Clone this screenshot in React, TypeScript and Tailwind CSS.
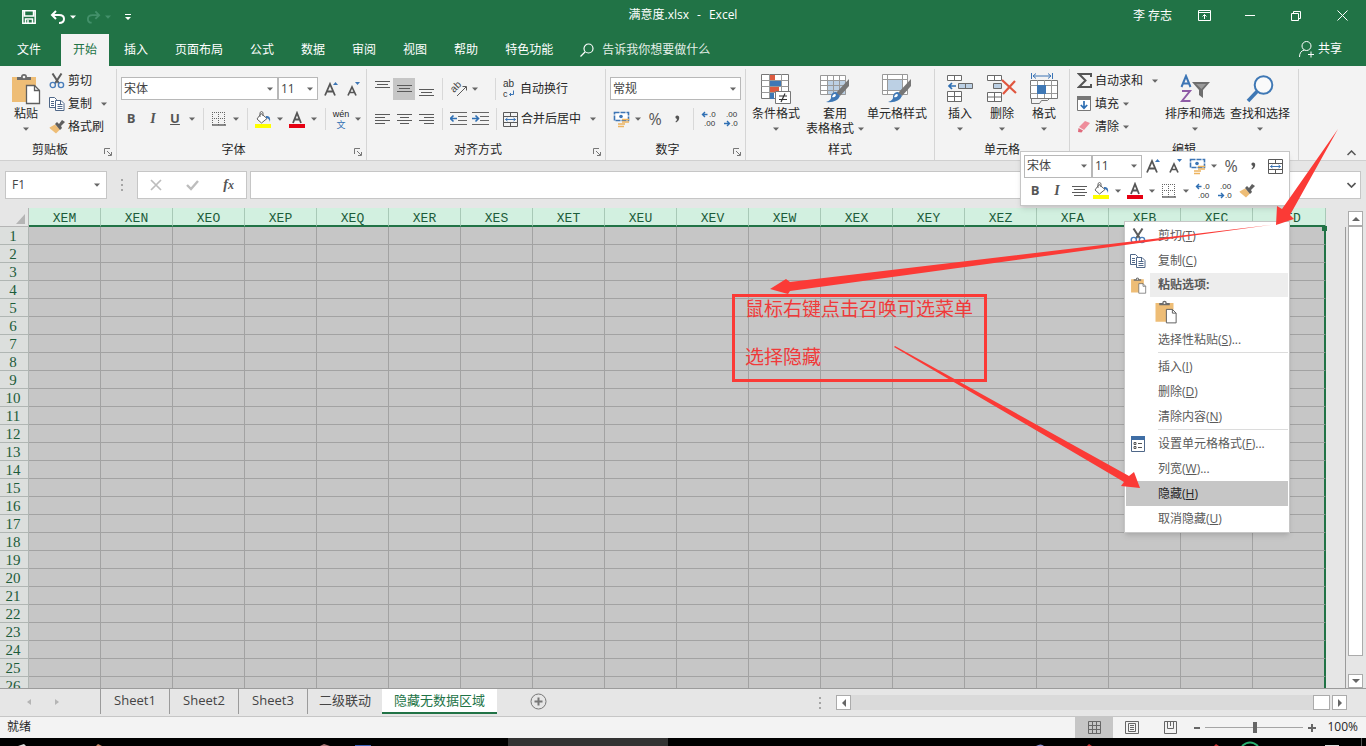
import { useState, type ReactNode } from "react";
import clsx from "clsx";

const columns = ["XEM", "XEN", "XEO", "XEP", "XEQ", "XER", "XES", "XET", "XEU", "XEV", "XEW", "XEX", "XEY", "XEZ", "XFA", "XFB", "XFC", "XFD"];
const rows = Array.from({ length: 26 }, (_, i) => i + 1);
const ribbonTabs = ["开始", "插入", "页面布局", "公式", "数据", "审阅", "视图", "帮助", "特色功能"];
const sheets = ["Sheet1", "Sheet2", "Sheet3", "二级联动", "隐藏无数据区域"];

/* ---------- small building blocks ---------- */

function Caret({ className = "text-[#666]" }: { className?: string }) {
  return (
    <svg width="6" height="4" viewBox="0 0 6 4" className={clsx("shrink-0", className)}>
      <path d="M0 0.5h6L3 3.8z" fill="currentColor" />
    </svg>
  );
}

function CaretBtn({ label }: { label: string }) {
  return (
    <button aria-label={label} className="flex h-[22px] w-3 shrink-0 items-center justify-center">
      <Caret />
    </button>
  );
}

function Tool({ label, active, children }: { label: string; active?: boolean; children: ReactNode }) {
  return (
    <button aria-label={label} className={clsx("flex h-[22px] w-[22px] shrink-0 items-center justify-center", active && "bg-[#c6c6c6]")}>
      {children}
    </button>
  );
}

function Sep() {
  return (
    <span className="flex h-[22px] w-[10px] shrink-0 justify-center">
      <span className="w-px bg-[#d8d8d8]" />
    </span>
  );
}

function Combo({ label, value, className }: { label: string; value: string; className: string }) {
  return (
    <label className={clsx("relative block h-[23px] shrink-0 border border-[#b8b8b8] bg-white", className)}>
      <select aria-label={label} defaultValue={value} className="block h-full w-full appearance-none bg-transparent pl-[2px] text-xs text-[#444] outline-none">
        <option>{value}</option>
      </select>
      <span className="pointer-events-none absolute inset-y-0 right-1 flex items-center"><Caret /></span>
    </label>
  );
}

function Group({ title, launcher, className, children }: { title: string; launcher?: boolean; className?: string; children: ReactNode }) {
  return (
    <section className={clsx("flex shrink-0 flex-col border-r border-[#d5d5d5]", className)}>
      <div className="h-[69px]">{children}</div>
      <div className={clsx("relative flex h-[22px] items-center justify-center pt-[2px] text-xs", launcher && "pr-4")}>
        {title}
        {launcher && (
          <button aria-label={`${title}设置`} className="absolute right-1 bottom-1">
            <svg width="8" height="8" viewBox="0 0 8 8" fill="none" stroke="#777">
              <path d="M0.5 6V0.5H6M3 3l4 4M7.5 4v3.5H4" />
            </svg>
          </button>
        )}
      </div>
    </section>
  );
}

function BigBtn({ icon, text, second, className }: { icon: ReactNode; text: string; second?: string; className: string }) {
  return (
    <button className={clsx("flex shrink-0 flex-col items-center pt-1 text-xs whitespace-nowrap", className)}>
      <span className="flex h-[33px] items-center pb-px">{icon}</span>
      <span className="leading-4">{text}</span>
      <span className="flex h-[14px] items-center gap-1">{second}<Caret /></span>
    </button>
  );
}

function SmallBtn({ icon, text, caret }: { icon: ReactNode; text: string; caret?: string }) {
  return (
    <button className="flex h-[23px] items-center text-xs whitespace-nowrap">
      <span className="mr-[2px] flex w-[18px] justify-center">{icon}</span>
      {text}
      {caret && <span className={caret}><Caret /></span>}
    </button>
  );
}

/* ---------- icons ---------- */

function Clipboard({ size }: { size: number }) {
  return (
    <svg width={size} height={size} viewBox="0 0 30 32" fill="none">
      <path d="M1 4h24v9h-9v16H1z" fill="#eebd76" />
      <path d="M6 7V4h4a3 3 0 0 1 6 0h4v3z" fill="#6b6b6b" />
      <circle cx="13" cy="4" r="1.3" fill="#f3f3f3" />
      <path d="M15.5 12.5h8l5 5v13h-13z" fill="#fff" stroke="#5f5f5f" strokeWidth="1.3" />
      <path d="M23.5 12.5v5h5" stroke="#5f5f5f" strokeWidth="1.3" />
    </svg>
  );
}

function Scissors() {
  return (
    <svg width="16" height="16" viewBox="0 0 16 16" fill="none">
      <path d="M3.5 0.5L10 10.5M12.5 0.5L6 10.5" stroke="#5c5c5c" strokeWidth="2" />
      <circle cx="3.8" cy="12" r="2.6" stroke="#4a7ebb" strokeWidth="1.4" />
      <circle cx="12" cy="12" r="2.6" stroke="#4a7ebb" strokeWidth="1.4" />
    </svg>
  );
}

function Copy() {
  return (
    <svg width="16" height="14" viewBox="0 0 16 14" fill="#fff" stroke="#4f6788">
      <path d="M0.5 0.5h5l2 2v8h-7z" />
      <path d="M2 4.5h3M2 6.5h3M2 8.5h3" />
      <path d="M6.5 3.5h5.5l3 3v7H6.5z" />
      <path d="M8.5 7.5h5M8.5 9.5h5M8.5 11.5h5M11.5 4v3" />
    </svg>
  );
}

function Brush() {
  return (
    <svg width="16" height="15" viewBox="0 0 16 15">
      <path d="M0.5 8.5L6 5.5l5 5-4 4-6-5z" fill="#eebd76" />
      <path d="M6 5l2-2 2 2 3-4 3 2-4 4 1 2-2 2z" fill="#5f5f5f" />
    </svg>
  );
}

function GrowFont({ down }: { down?: boolean }) {
  return (
    <svg width="15" height="16" viewBox="0 0 15 16" fill="none">
      {down
        ? <path d="M2 14.500L6 6l4 8.500M3.500 11.500h5" stroke="#555" strokeWidth="1.7" />
        : <path d="M1 14.500L6 3l5 11.500M3 10.500h6" stroke="#555" strokeWidth="1.8" />}
      {down ? <path d="M9 1h5L11.5 4z" fill="#3c75b5" /> : <path d="M9 4h5L11.5 1z" fill="#3c75b5" />}
    </svg>
  );
}

function Borders() {
  return (
    <svg width="14" height="14" viewBox="0 0 14 14" stroke="#666">
      <path d="M0 0.5h14M0 6.5h14M0.5 0v13M6.5 0v13M12.5 0v13" strokeDasharray="1 1" />
      <path d="M0 13h14" strokeWidth="1.5" />
    </svg>
  );
}

function Bucket() {
  return (
    <svg width="17" height="17" viewBox="0 0 17 17" fill="none">
      <path d="M6 2.5L12 7.5 6.5 12 2 8z" fill="#fff" stroke="#666" />
      <path d="M5 6V1.5q1.5-2 3 0V5" stroke="#666" />
      <path d="M11 5q5-1 4 6-1-4-4-4z" fill="#3c75b5" />
      <path d="M0 13h16v4H0z" fill="#ff0" />
    </svg>
  );
}

function FontColor() {
  return (
    <svg width="16" height="17" viewBox="0 0 16 17" fill="none">
      <path d="M4 12L8 2l4 10M5.5 8.5h5" stroke="#555" strokeWidth="1.8" />
      <path d="M0 13h16v4H0z" fill="#e60012" />
    </svg>
  );
}

// three or four lines, drawn for the chosen alignment
function Lines({ d }: { d: string }) {
  return (
    <svg width="15" height="20" viewBox="0 0 15 20" stroke="#5a5a5a"><path d={d} /></svg>
  );
}

function Indent({ right }: { right?: boolean }) {
  return (
    <svg width="17" height="14" viewBox="0 0 17 14" fill="none">
      <path d="M0 0.5h17M8 4.5h9M8 8.5h9M0 12.5h17" stroke="#666" />
      <path d={right ? "M0 6.5h6M3.5 3.5l3 3-3 3" : "M1 6.5h6M3.5 3.5l-3 3 3 3"} stroke="#2f6fb3" strokeWidth="1.6" />
    </svg>
  );
}

function Rotate() {
  return (
    <svg width="22" height="22" viewBox="0 0 22 22" fill="none" stroke="#5a5a5a">
      <text x="7" y="15" fontSize="10" fill="#444" stroke="none" transform="rotate(-45 7 15)" className="font-['Liberation_Sans',sans-serif]">ab</text>
      <path d="M10 18L19 9M15.5 8.500H19.500V12.500" />
    </svg>
  );
}

function Wrap() {
  return (
    <svg width="14" height="22" viewBox="0 0 14 22" fill="none" className="font-['Liberation_Sans',sans-serif]">
      <text x="1" y="9" fontSize="10" fill="#333">ab</text>
      <text x="1" y="19" fontSize="9" fill="#333">c</text>
      <path d="M11.5 12.500v4H7.500M9 15L7.500 16.500 9 18" stroke="#3c75b5" />
    </svg>
  );
}

function Merge() {
  return (
    <svg width="15" height="15" viewBox="0 0 15 15" fill="none">
      <path d="M0.5 0.5h14v14H0.5zM0.5 4.5h14M0.5 10.5h14M7.5 0.5v4M7.5 10.5v4" stroke="#5a5a5a" />
      <path d="M2.5 7.5h10M4.5 6l-2 1.5 2 1.5M10.5 6l2 1.5-2 1.5" stroke="#3c75b5" />
    </svg>
  );
}

function Money() {
  return (
    <svg width="17" height="17" viewBox="0 0 17 17" fill="none">
      <path d="M1.5 1.5h14v8h-14z" fill="#fff" stroke="#3c75b5" strokeWidth="1.6" strokeDasharray="5 1" />
      <circle cx="8" cy="5.5" r="1.8" fill="#3c75b5" />
      <path d="M9 8.5h7M9 11h7M5 13h7M5 15.5h6" stroke="#edb45f" strokeWidth="1.7" />
    </svg>
  );
}

function Decimal({ less }: { less?: boolean }) {
  return (
    <svg width="18" height="20" viewBox="0 0 18 20" fill="none" fontSize="8" className="font-['Liberation_Sans',sans-serif]">
      <text x={less ? 4 : 9} y="8" fill="#333">{less ? ".00" : ".0"}</text>
      <text x={less ? 9 : 4} y="17" fill="#333">{less ? ".0" : ".00"}</text>
      <path d={less ? "M2 14.5h5M5 12l2.5 2.5L5 17" : "M2.5 5.5h5M5 3L2.5 5.5 5 8"} stroke="#2f6fb3" strokeWidth="1.4" />
    </svg>
  );
}

function CondFormat() {
  return (
    <svg width="30" height="30" viewBox="0 0 30 30" fill="none">
      <path d="M0.5 0.5h27v24h-27z" fill="#fff" stroke="#777" />
      <path d="M0.5 6.5h27M0.5 12.5h27M0.5 18.5h27M8.5 0v24M20.5 0v24" stroke="#999" />
      <path d="M9 1h5v5H9zM9 13h9v5H9z" fill="#dd5b40" />
      <path d="M9 7h11v5H9zM9 19h4v6H9z" fill="#3f78b5" />
      <path d="M14.5 17.5h15v12h-15z" fill="#fff" stroke="#777" />
      <path d="M18 22h8M18 25.5h8M24 19.5l-4 8.5" stroke="#333" strokeWidth="1.2" />
    </svg>
  );
}

function BrushTip() {
  return (
    <>
      <path d="M29 5v7L20 22l-4-3z" fill="#777" />
      <path d="M16 18l4 4q-3 7-14 6 6-2 5-6 1-4 5-4z" fill="#3f78b5" />
      <path d="M13 21q2-2 3 0-1 3-4 2z" fill="#fff" />
    </>
  );
}

function TableFormat() {
  return (
    <svg width="30" height="30" viewBox="0 0 30 30" fill="none">
      <path d="M0.5 1.5h25v19h-25z" fill="#fff" />
      <path d="M7 6h19v15H7z" fill="#bcd0e4" />
      <path d="M0.5 1.5h25v19h-25zM0 6.5h25M0 11.5h25M0 16.5h25M7.5 1v19M13.5 1v19M19.5 1v19" stroke="#999" />
      <BrushTip />
    </svg>
  );
}

function CellStyle() {
  return (
    <svg width="30" height="30" viewBox="0 0 30 30" fill="none">
      <path d="M0.5 0.5h25v20h-25z" fill="#fff" />
      <path d="M0.5 0.5h25v20h-25zM0 5.5h25M0 16.5h25M5.5 0v20M20.5 0v20" stroke="#999" />
      <path d="M6 6h14v10H6z" fill="#bcd0e4" />
      <BrushTip />
    </svg>
  );
}

function InsertCells() {
  return (
    <svg width="26" height="28" viewBox="0 0 26 28" fill="none">
      <path d="M0.5 0.5h14v5H0.5zM7.5 0.5v5M0.5 16.5h14v10H0.5zM7.5 16.5v10M0.5 21.5h14" fill="#fff" stroke="#6a6a6a" />
      <path d="M11.5 8.5h14v5h-14zM18.5 8.5v5" fill="#bcd0e4" stroke="#6a6a6a" />
      <path d="M2 11h7M5 8l-3 3 3 3" stroke="#2f6fb3" strokeWidth="1.7" />
    </svg>
  );
}

function DeleteCells() {
  return (
    <svg width="30" height="28" viewBox="0 0 30 28" fill="none">
      <path d="M0.5 0.5h14v5H0.5zM7.5 0.5v5M0.5 17.5h14v9H0.5zM7.5 17.5v9M0.5 22h14" fill="#fff" stroke="#6a6a6a" />
      <path d="M6.5 8.5h8v5h-8z" fill="#bcd0e4" stroke="#6a6a6a" />
      <path d="M15 5l14 13M28 6L16 19" stroke="#e0563f" strokeWidth="2.2" />
    </svg>
  );
}

function FormatCells() {
  return (
    <svg width="28" height="32" viewBox="0 0 28 32" fill="none">
      <path d="M1.5 0v6M22.5 0v6M3 3h18M6 0.5L3 3l3 2.5M18 0.5L21 3l-3 2.5" stroke="#3c75b5" />
      <path d="M0.5 7.5h27v18h-27z" fill="#fff" stroke="#777" />
      <path d="M0 12.5h27M0 20.5h27M7.5 7v18M14.5 7v18M21.5 7v18" stroke="#999" />
      <path d="M7 12h9v9H7z" fill="#3f78b5" />
      <path d="M1.5 26v4.5h8l2-3h6l2-2" stroke="#777" />
    </svg>
  );
}

function SortFilter() {
  return (
    <svg width="30" height="30" viewBox="0 0 30 30" fill="none">
      <path d="M1.5 13L6 2l4.5 11M3 9.5h6" stroke="#3c75b5" strokeWidth="2" />
      <path d="M2 17h8L2 27h8.5" stroke="#8e5ba6" strokeWidth="2" />
      <path d="M12 8h18l-7 8v8l-4-3v-5z" fill="#6e6e6e" />
      <path d="M16 10h10l-4.5 5z" fill="#9a9a9a" />
    </svg>
  );
}

function Find() {
  return (
    <svg width="28" height="28" viewBox="0 0 28 28" fill="none">
      <circle cx="17.5" cy="10" r="8.8" stroke="#3f78b5" strokeWidth="2" fill="#fafafa" />
      <path d="M11 16.5L2 26" stroke="#3f78b5" strokeWidth="3.6" />
    </svg>
  );
}

function Sigma() {
  return (
    <svg width="15" height="15" viewBox="0 0 15 15" fill="none" stroke="#555" strokeWidth="2">
      <path d="M14 4V1H2l6.5 6.5L2 14h12v-3" />
    </svg>
  );
}

function Fill() {
  return (
    <svg width="14" height="15" viewBox="0 0 14 15" fill="none">
      <path d="M0.5 0.5h13v14H0.5z" fill="#fff" stroke="#777" />
      <path d="M0 0h14v4H0z" fill="#777" />
      <path d="M7 5v7M3.8 9L7 12.2 10.2 9" stroke="#2f6fb3" strokeWidth="1.7" />
    </svg>
  );
}

function Eraser() {
  return (
    <svg width="14" height="13" viewBox="0 0 14 13">
      <path d="M8 1l5 2-6 7-5-3z" fill="#ee8d9b" />
      <path d="M1.5 8L6 10.5 4.5 12.5 1 12z" fill="#e06a7c" />
    </svg>
  );
}

function FormatDialog() {
  return (
    <svg width="14" height="16" viewBox="0 0 14 16" fill="none">
      <path d="M0.5 0.5h13v15H0.5z" fill="#fff" stroke="#4f6788" />
      <path d="M0 0h14v4H0z" fill="#3f6ea5" />
      <path d="M3 6.5h2v2H3zM3 10.5h2v2H3z" stroke="#555" />
      <path d="M7 7.5h4M7 11.5h4" stroke="#555" />
    </svg>
  );
}

const Bold = () => <b className="text-[13px] text-[#555]">B</b>;
const Italic = () => <i className="font-['Liberation_Serif',serif] text-sm font-bold text-[#555]">I</i>;
const Percent = () => <span className="text-base text-[#555]">%</span>;
const Comma = () => (
  <svg width="5" height="8" viewBox="0 0 5 8"><path d="M0.5 1.5q1.5-2 3.5 0 1 4-3 6l-.5-1q1.5-1 1.5-2.5-2-.5-1.5-2.5z" fill="#555" /></svg>
);

/* ---------- window sections ---------- */

function TitleBar() {
  return (
    <div className="grid h-[34px] grid-cols-[1fr_auto_1fr] items-center pb-1 text-xs text-white">
      <div className="flex items-center pt-1 pl-[22px]">
        <button aria-label="保存">
          <svg width="14" height="14" viewBox="0 0 14 14" fill="none" stroke="#fff" strokeWidth="1.5">
            <path d="M0.8 0.8h12.4v12.4H0.8zM2.5 1v5h9V1M3.5 13V9h7v4M6 10v3" />
          </svg>
        </button>
        <button aria-label="撤消" className="ml-[14px]">
          <svg width="16" height="14" viewBox="0 0 16 14" fill="none" stroke="#fff" strokeWidth="2">
            <path d="M6 1L2 5l4 4M2 5h7q5 0 5 4t-5 4" />
          </svg>
        </button>
        <span className="ml-1"><Caret className="text-white" /></span>
        <button aria-label="恢复" className="ml-[10px]">
          <svg width="15" height="14" viewBox="0 0 16 14" fill="none" stroke="#43906a" strokeWidth="2">
            <path d="M10 1l4 4-4 4M14 5H7Q2 5 2 9t4 4" />
          </svg>
        </button>
        <span className="ml-1"><Caret className="text-[#43906a]" /></span>
        <button aria-label="自定义快速访问工具栏" className="ml-[13px]">
          <svg width="8" height="8" viewBox="0 0 8 8" fill="#fff"><path d="M1 1h6v1H1zM1 4h6L4 7z" /></svg>
        </button>
      </div>
      <h1 className="flex gap-2"><span>满意度.xlsx</span><span>-</span><span>Excel</span></h1>
      <div className="flex items-center justify-end pt-px pr-[18px]">
        <span className="mr-[26px]">李 存志</span>
        <button aria-label="功能区显示选项" className="mr-[34px]">
          <svg width="13" height="11" viewBox="0 0 13 11" fill="none" stroke="#fff">
            <path d="M0.5 0.5h12v10H0.5zM0.5 2.5h12M6.5 9V4.5M4.5 6.5l2-2 2 2" />
          </svg>
        </button>
        <button aria-label="最小化" className="mr-9">
          <svg width="10" height="10" viewBox="0 0 10 10" stroke="#fff"><path d="M0 4.5h10" /></svg>
        </button>
        <button aria-label="还原" className="mr-9">
          <svg width="10" height="10" viewBox="0 0 10 10" fill="none" stroke="#fff"><path d="M0.5 2.5h7v7h-7zM2.5 2.5v-2h7v7h-2" /></svg>
        </button>
        <button aria-label="关闭">
          <svg width="11" height="11" viewBox="0 0 11 11" stroke="#fff"><path d="M0.5 0.5l10 10M10.5 0.5l-10 10" /></svg>
        </button>
      </div>
    </div>
  );
}

function RibbonTabs() {
  const [tab, setTab] = useState("开始");
  return (
    <nav className="flex h-8 items-stretch gap-[3px] text-xs text-white">
      <button className="w-[58px]">文件</button>
      {ribbonTabs.map((t) => (
        <button key={t} onClick={() => setTab(t)} className={clsx("px-3 whitespace-nowrap", t === tab && "bg-[#f3f3f3] text-[#217346]")}>
          {t}
        </button>
      ))}
      <label className="ml-3 flex items-center gap-2">
        <svg width="14" height="14" viewBox="0 0 14 14" fill="none" stroke="#fff" strokeWidth="1.2">
          <circle cx="8.5" cy="5.5" r="4.5" /><path d="M5 9L0.5 13.5" />
        </svg>
        <input placeholder="告诉我你想要做什么" className="w-40 bg-transparent text-xs outline-none placeholder:text-[#e4efe8]" />
      </label>
      <button className="mr-6 ml-auto flex items-center gap-1 pb-[2px]">
        <svg width="15" height="17" viewBox="0 0 15 17" fill="none" stroke="#fff">
          <circle cx="7.5" cy="5" r="4.5" /><path d="M0.5 16q0-6 5-7M9 13.5h6M12 10.5v6" />
        </svg>
        共享
      </button>
    </nav>
  );
}

function Ribbon() {
  return (
    <div className="flex border-b border-[#d0d0d0] bg-[#f3f3f3] pt-[3px] text-[#262626]">
      <Group title="剪贴板" launcher className="w-[117px]">
        <div className="flex">
          <BigBtn icon={<Clipboard size={32} />} text="粘贴" className="ml-2 w-9" />
          <div className="ml-1 flex flex-col">
            <SmallBtn icon={<Scissors />} text="剪切" />
            <SmallBtn icon={<Copy />} text="复制" caret="ml-[9px]" />
            <SmallBtn icon={<Brush />} text="格式刷" />
          </div>
        </div>
      </Group>

      <Group title="字体" launcher className="w-[250px]">
        <div className="flex flex-col gap-2 pt-2 pl-1">
          <div className="flex h-[23px] items-center">
            <Combo label="字体" value="宋体" className="w-[157px]" />
            <Combo label="字号" value="11" className="w-10" />
            <span className="ml-[2px] flex">
              <Tool label="增大字号"><GrowFont /></Tool>
              <Tool label="减小字号"><GrowFont down /></Tool>
            </span>
          </div>
          <div className="-ml-px flex h-[22px] items-center">
            <Tool label="加粗"><Bold /></Tool>
            <Tool label="倾斜"><Italic /></Tool>
            <Tool label="下划线"><b className="text-[13px] text-[#555] underline">U</b></Tool>
            <CaretBtn label="下划线选项" />
            <Sep />
            <Tool label="边框"><Borders /></Tool>
            <CaretBtn label="边框选项" />
            <Sep />
            <Tool label="填充颜色"><Bucket /></Tool>
            <CaretBtn label="填充颜色选项" />
            <Tool label="字体颜色"><FontColor /></Tool>
            <CaretBtn label="字体颜色选项" />
            <Sep />
            <Tool label="拼音指南">
              <span className="flex flex-col items-center gap-px font-['Liberation_Sans','Noto_Sans_CJK_SC',sans-serif] text-[9px] leading-[10px]">
                <span>wén</span><span className="text-[#2f6fb3]">文</span>
              </span>
            </Tool>
            <CaretBtn label="拼音选项" />
          </div>
        </div>
      </Group>

      <Group title="对齐方式" launcher className="w-[239px]">
        <div className="flex flex-col gap-2 pt-2 pl-1">
          <div className="flex h-[23px] items-center">
            <Tool label="顶端对齐"><Lines d="M0 2.5h15M2 5.5h11M0 8.5h15" /></Tool>
            <Tool label="垂直居中" active><Lines d="M0 6.5h15M2 9.5h11M0 12.5h15" /></Tool>
            <Tool label="底端对齐"><Lines d="M0 10.5h15M2 13.5h11M0 16.5h15" /></Tool>
            <Sep />
            <Tool label="方向"><Rotate /></Tool>
            <CaretBtn label="方向选项" />
            <span className="w-[9px]" />
            <Sep />
            <SmallBtn icon={<Wrap />} text="自动换行" />
          </div>
          <div className="flex h-[22px] items-center">
            <Tool label="左对齐"><Lines d="M0 5.5h15M0 8.5h10M0 11.5h15M0 14.5h10" /></Tool>
            <Tool label="居中"><Lines d="M0 5.5h15M3 8.5h9M0 11.5h15M3 14.5h9" /></Tool>
            <Tool label="右对齐"><Lines d="M0 5.5h15M5 8.5h10M0 11.5h15M5 14.5h10" /></Tool>
            <Sep />
            <Tool label="减少缩进量"><Indent /></Tool>
            <Tool label="增加缩进量"><Indent right /></Tool>
            <Sep />
            <SmallBtn icon={<Merge />} text="合并后居中" caret="ml-[9px]" />
          </div>
        </div>
      </Group>

      <Group title="数字" launcher className="w-[140px]">
        <div className="flex flex-col gap-2 pt-2 pl-1">
          <Combo label="数字格式" value="常规" className="w-[131px]" />
          <div className="flex h-[22px] items-center">
            <Tool label="会计数字格式"><Money /></Tool>
            <CaretBtn label="会计数字格式选项" />
            <Tool label="百分比样式"><Percent /></Tool>
            <Tool label="千位分隔样式"><Comma /></Tool>
            <Sep />
            <Tool label="增加小数位数"><Decimal /></Tool>
            <Tool label="减少小数位数"><Decimal less /></Tool>
          </div>
        </div>
      </Group>

      <Group title="样式" className="w-[189px]">
        <div className="flex">
          <BigBtn icon={<CondFormat />} text="条件格式" className="w-[60px]" />
          <BigBtn icon={<TableFormat />} text="套用" second="表格格式" className="w-[58px]" />
          <BigBtn icon={<CellStyle />} text="单元格样式" className="w-[66px]" />
        </div>
      </Group>

      <Group title="单元格" className="w-[135px]">
        <div className="flex pl-1">
          <BigBtn icon={<InsertCells />} text="插入" className="w-[42px]" />
          <BigBtn icon={<DeleteCells />} text="删除" className="w-[42px]" />
          <BigBtn icon={<FormatCells />} text="格式" className="w-[42px]" />
        </div>
      </Group>

      <Group title="编辑" className="w-[229px]">
        <div className="flex pl-[5px]">
          <div className="flex w-[88px] flex-col">
            <SmallBtn icon={<Sigma />} text="自动求和" caret="ml-[9px]" />
            <SmallBtn icon={<Fill />} text="填充" caret="ml-1" />
            <SmallBtn icon={<Eraser />} text="清除" caret="ml-1" />
          </div>
          <BigBtn icon={<SortFilter />} text="排序和筛选" className="w-16" />
          <BigBtn icon={<Find />} text="查找和选择" className="w-[66px]" />
        </div>
      </Group>

      <button aria-label="折叠功能区" className="mr-[10px] mb-1 ml-auto self-end">
        <svg width="9" height="6" viewBox="0 0 9 6" fill="none" stroke="#555" strokeWidth="1.5"><path d="M0.5 5l4-4 4 4" /></svg>
      </button>
    </div>
  );
}

function FormulaBar() {
  return (
    <div className="flex h-[47px] shrink-0 items-center px-[5px]">
      <label className="relative flex h-7 w-[102px] border border-[#c6c6c6] bg-white">
        <input aria-label="名称框" defaultValue="F1" className="w-full bg-transparent pl-[6px] text-xs text-[#444] outline-none" />
        <span className="absolute inset-y-0 right-[6px] flex items-center"><Caret /></span>
      </label>
      <span className="mx-[14px] flex flex-col gap-[3px]">
        <i className="size-[2px] bg-[#a5a5a5]" /><i className="size-[2px] bg-[#a5a5a5]" /><i className="size-[2px] bg-[#a5a5a5]" />
      </span>
      <div className="flex h-7 w-[110px] items-center justify-around border border-[#c6c6c6] bg-white">
        <button aria-label="取消">
          <svg width="12" height="12" viewBox="0 0 12 12" stroke="#bdbdbd" strokeWidth="1.7"><path d="M1 1l10 10M11 1L1 11" /></svg>
        </button>
        <button aria-label="输入">
          <svg width="13" height="12" viewBox="0 0 13 12" fill="none" stroke="#bdbdbd" strokeWidth="2.4"><path d="M1 6l4 4 7-8" /></svg>
        </button>
        <button aria-label="插入函数" className="font-['Liberation_Serif',serif] text-sm font-bold text-[#555] italic">
          f<span className="text-xs">x</span>
        </button>
      </div>
      <label className="relative ml-[3px] flex h-7 flex-1 border border-[#c6c6c6] bg-white">
        <input aria-label="编辑栏" className="w-full bg-transparent px-2 text-xs outline-none" />
        <span className="absolute inset-y-0 right-1 flex items-center">
          <svg width="9" height="6" viewBox="0 0 9 6" fill="none" stroke="#555" strokeWidth="1.7"><path d="M0.5 1l4 4 4-4" /></svg>
        </span>
      </label>
    </div>
  );
}

function Grid() {
  return (
    <div className="flex min-h-0 flex-1 overflow-hidden">
      <div className="relative min-w-0 flex-1 overflow-hidden">
        <table className="w-[1326px] table-fixed border-separate border-spacing-0">
          <thead>
            <tr className="h-[19px]">
              <th className="w-[29px] border-r border-b border-[#b5b5b5] p-0">
                <svg width="10" height="10" viewBox="0 0 10 10" className="mt-[3px] ml-4"><path d="M9 0v10H0z" fill="#b5b5b5" /></svg>
              </th>
              {columns.map((c) => (
                <th key={c} scope="col" className="h-[19px] w-[72px] border-r border-b-2 border-r-[#a8c9b7] border-b-[#217346] bg-[#d2f0e0] p-0 pt-1 font-['Liberation_Mono',monospace] text-[13px] leading-[13px] font-normal text-[#1c5c3a] last:w-[73px]">
                  {c}
                </th>
              ))}
            </tr>
          </thead>
          <tbody>
            {rows.map((r) => (
              <tr key={r} className="h-[18px]">
                <th scope="row" className="h-[18px] border-r border-b border-[#b0b6b3] bg-[#dcdfdd] p-0 text-center font-['Liberation_Serif',serif] text-[15px] leading-[17px] font-normal text-[#1c5c3a]">
                  <span className="block h-[17px] pt-px pr-[2px]">{r}</span>
                </th>
                {columns.map((c) => (
                  <td key={c} className="border-r border-b border-[#a2a2a2] bg-[#c6c6c6] p-0 last:border-r-2 last:border-r-[#217346]" />
                ))}
              </tr>
            ))}
          </tbody>
        </table>
        <span className="absolute top-[18px] left-[1322px] size-[5px] bg-[#217346]" />
      </div>
      <div className="mt-[19px] w-[3px] border-l border-[#9b9b9b]" />
      <div className="mt-[3px] mr-[3px] flex w-[15px] flex-col">
        <button aria-label="向上滚动" className="flex h-[15px] items-center justify-center border border-[#ababab] bg-white">
          <svg width="8" height="4" viewBox="0 0 8 4" fill="#666"><path d="M0 4L4 0l4 4z" /></svg>
        </button>
        <div className="h-[430px] shrink-0 border border-[#ababab] bg-white" />
        <div className="flex-1" />
        <button aria-label="向下滚动" className="flex h-[14px] items-center justify-center border border-[#ababab] bg-white">
          <svg width="8" height="4" viewBox="0 0 8 4" fill="#666"><path d="M0 0h8L4 4z" /></svg>
        </button>
      </div>
    </div>
  );
}

function SheetBar() {
  const [active, setActive] = useState("隐藏无数据区域");
  return (
    <div className="flex h-7 shrink-0 items-start border-t border-[#9b9b9b] text-[13px] text-[#444]">
      <div className="flex h-[26px] w-[100px] items-center gap-6 pl-[27px]">
        <button aria-label="上一张"><svg width="4" height="6" viewBox="0 0 4 6" fill="#b5b5b5"><path d="M4 0v6L0 3z" /></svg></button>
        <button aria-label="下一张"><svg width="4" height="6" viewBox="0 0 4 6" fill="#b5b5b5"><path d="M0 0v6l4-3z" /></svg></button>
      </div>
      {sheets.map((s) => (
        <button
          key={s}
          onClick={() => setActive(s)}
          className={clsx(
            "flex h-[25px] min-w-[69px] justify-center leading-[22px] whitespace-nowrap",
            s === active ? "border-b-2 border-[#217346] bg-white px-3 text-[#217346]" : "border-l border-[#9b9b9b] px-[11px]",
          )}
        >
          {s}
        </button>
      ))}
      <button aria-label="新工作表" className="mt-1 ml-[33px]">
        <svg width="17" height="17" viewBox="0 0 17 17" fill="none" stroke="#777">
          <circle cx="8.5" cy="8.5" r="7.5" /><path d="M4.5 8.5h8M8.5 4.5v8" strokeWidth="2" />
        </svg>
      </button>
      <div className="mt-[6px] mr-[19px] ml-auto flex h-[15px] items-center">
        <span className="mr-[15px] flex flex-col gap-[3px]">
          <i className="size-[2px] bg-[#a5a5a5]" /><i className="size-[2px] bg-[#a5a5a5]" /><i className="size-[2px] bg-[#a5a5a5]" />
        </span>
        <button aria-label="向左滚动" className="flex h-[15px] w-[15px] items-center justify-center border border-[#ababab] bg-white">
          <svg width="4" height="8" viewBox="0 0 4 8" fill="#666"><path d="M4 0v8L0 4z" /></svg>
        </button>
        <div className="h-[15px] w-[462px] bg-[#dadada]" />
        <div className="h-[15px] w-[17px] border border-[#ababab] bg-white" />
        <button aria-label="向右滚动" className="ml-[2px] flex h-[15px] w-[15px] items-center justify-center border border-[#ababab] bg-white">
          <svg width="4" height="8" viewBox="0 0 4 8" fill="#666"><path d="M0 0v8l4-4z" /></svg>
        </button>
      </div>
    </div>
  );
}

function StatusBar() {
  return (
    <div className="flex h-[22px] shrink-0 items-center border-t border-[#c6c6c6] bg-[#f3f3f3] pl-[7px] text-xs text-[#262626]">
      <span className="pb-px">就绪</span>
      <div className="ml-auto flex h-full items-center">
        <button aria-label="普通" className="flex h-full w-[38px] items-center justify-center bg-[#c6c6c6]">
          <svg width="13" height="13" viewBox="0 0 13 13" fill="none" stroke="#666"><path d="M0.5 0.5h12v12H0.5zM4.5 0v13M8.5 0v13M0 4.5h13M0 8.5h13" /></svg>
        </button>
        <button aria-label="页面布局" className="flex h-full w-[38px] items-center justify-center">
          <svg width="14" height="13" viewBox="0 0 14 13" fill="none" stroke="#666"><path d="M0.5 0.5h13v12H0.5zM3.5 2.5h7v8h-7zM5 4.5h4M5 6.5h4M5 8.5h4" /></svg>
        </button>
        <button aria-label="分页预览" className="flex h-full w-[38px] items-center justify-center">
          <svg width="13" height="13" viewBox="0 0 13 13" fill="none" stroke="#666"><path d="M0.5 0.5h12v12H0.5zM3.5 0v7.5h6V0M6.5 0v5" /></svg>
        </button>
        <button aria-label="缩小" className="ml-[5px] h-[2px] w-[6px] bg-[#666]" />
        <span className="mx-[5px] flex h-full w-[98px] items-center">
          <span className="h-px w-12 bg-[#a5a5a5]" />
          <span className="h-[11px] w-1 bg-[#666]" />
          <span className="h-px flex-1 bg-[#a5a5a5]" />
        </span>
        <button aria-label="放大">
          <svg width="8" height="8" viewBox="0 0 8 8" stroke="#666" strokeWidth="2"><path d="M0 4h8M4 0v8" /></svg>
        </button>
        <span className="w-[50px] pr-2 pb-px text-right">100%</span>
      </div>
    </div>
  );
}

// the top edge of the desktop taskbar
function Taskbar() {
  return (
    <div className="flex h-2 shrink-0 justify-between bg-black">
      <svg width="400" height="8" viewBox="0 0 400 8">
        <path d="M18 8l6-2 2 2z" fill="#ddd" /><path d="M96 8l2-2 4 2z" fill="#c98a6a" /><path d="M320 8l4-2 6 2z" fill="#a77" />
        <path d="M355 7h16v1h-16z" fill="#3d62b8" />
      </svg>
      <div className="mr-auto ml-[108px] w-40 bg-[#333]" />
      <svg width="340" height="8" viewBox="0 0 340 8" fill="none">
        <path d="M10 8q5-3 8 0" fill="#8a8fd0" /><path d="M61 8l2-2 3 2z" fill="#c33" /><path d="M188 8l2-2 3 2z" fill="#c33" />
        <path d="M216 8q8-7 16 0" stroke="#27b070" strokeWidth="2" /><path d="M299 7h14v1h-14z" fill="#ddd" /><path d="M335.5 0v8" stroke="#555" />
      </svg>
    </div>
  );
}

/* ---------- floating parts ---------- */

function MiniToolbar() {
  return (
    <div role="toolbar" className="absolute top-[151px] left-[1020px] flex w-[270px] flex-col border border-[#c6c6c6] bg-white py-[2px] pl-[3px] shadow-md">
      <div className="flex h-[25px] items-center pb-px">
        <Combo label="字体" value="宋体" className="w-[68px]" />
        <Combo label="字号" value="11" className="w-[50px]" />
        <Tool label="增大字号"><GrowFont /></Tool>
        <Tool label="减小字号"><GrowFont down /></Tool>
        <Tool label="会计数字格式"><Money /></Tool>
        <CaretBtn label="会计数字格式选项" />
        <Tool label="百分比样式"><Percent /></Tool>
        <Tool label="千位分隔样式"><Comma /></Tool>
        <Tool label="合并后居中"><Merge /></Tool>
      </div>
      <div className="flex h-6 items-center pb-px">
        <Tool label="加粗"><Bold /></Tool>
        <Tool label="倾斜"><Italic /></Tool>
        <Tool label="居中"><Lines d="M0 5.5h15M2 8.5h11M0 11.5h15M2 14.5h11" /></Tool>
        <Tool label="填充颜色"><Bucket /></Tool>
        <CaretBtn label="填充颜色选项" />
        <Tool label="字体颜色"><FontColor /></Tool>
        <CaretBtn label="字体颜色选项" />
        <Tool label="边框"><Borders /></Tool>
        <CaretBtn label="边框选项" />
        <Tool label="增加小数位数"><Decimal /></Tool>
        <Tool label="减少小数位数"><Decimal less /></Tool>
        <Tool label="格式刷"><Brush /></Tool>
      </div>
    </div>
  );
}

function MenuItem({ text, hotkey, more, icon, active }: { text: string; hotkey: string; more?: boolean; icon?: ReactNode; active?: boolean }) {
  return (
    <button role="menuitem" className={clsx("flex h-[25px] w-full items-center text-left", active && "bg-[#c6c6c6] text-[#262626]")}>
      <span className="mr-2 flex w-6 justify-center">{icon}</span>
      <span>{text}(<u>{hotkey}</u>){more && "..."}</span>
    </button>
  );
}

function ContextMenu() {
  return (
    <div role="menu" className="absolute top-[221px] left-[1124px] w-[166px] border border-[#c6c6c6] bg-white p-px text-xs text-[#5a5a5a] shadow-md">
      <MenuItem text="剪切" hotkey="T" icon={<Scissors />} />
      <MenuItem text="复制" hotkey="C" icon={<Copy />} />
      <div className="flex h-6 items-center">
        <span className="flex w-6 justify-center"><Clipboard size={17} /></span>
        <span className="flex h-full flex-1 items-center bg-[#ededed] pl-2 font-bold">粘贴选项:</span>
      </div>
      <button aria-label="粘贴" className="ml-7 flex h-[30px] items-center"><Clipboard size={24} /></button>
      <MenuItem text="选择性粘贴" hotkey="S" more />
      <hr className="mb-px ml-8 border-[#dcdcdc]" />
      <MenuItem text="插入" hotkey="I" />
      <MenuItem text="删除" hotkey="D" />
      <MenuItem text="清除内容" hotkey="N" />
      <hr className="mb-px ml-8 border-[#dcdcdc]" />
      <MenuItem text="设置单元格格式" hotkey="F" more icon={<FormatDialog />} />
      <MenuItem text="列宽" hotkey="W" more />
      <MenuItem text="隐藏" hotkey="H" active />
      <MenuItem text="取消隐藏" hotkey="U" />
    </div>
  );
}

function Annotations() {
  return (
    <>
      <div className="absolute top-[294px] left-[732px] w-[255px] border-3 border-[#fb3a36] pb-[10px] pl-[10px] text-[19px] leading-6 whitespace-nowrap text-[#f03a3a]">
        <p>鼠标右键点击召唤可选菜单</p>
        <p className="mt-6">选择隐藏</p>
      </div>
      <svg width="1366" height="746" viewBox="0 0 1366 746" fill="#fb3a36" className="pointer-events-none absolute top-0 left-0">
        <path d="M1338 129L1282 209 1277 206 1276 225 1294 219 1290 215z" />
        <path d="M1278 224L790 291 788 294 770 289 786 279 790 282z" />
        <path d="M895 346L894 347 1124 482 1121 486 1140 488 1134 472 1129 476z" />
      </svg>
    </>
  );
}

export default function App() {
  return (
    <div className="relative flex h-screen flex-col overflow-hidden bg-[#e6e6e6] font-['Open_Sans','Noto_Sans_CJK_SC',sans-serif]">
      <header className="shrink-0 bg-[#217346]">
        <TitleBar />
        <RibbonTabs />
        <Ribbon />
      </header>
      <FormulaBar />
      <Grid />
      <SheetBar />
      <StatusBar />
      <Taskbar />
      <MiniToolbar />
      <ContextMenu />
      <Annotations />
    </div>
  );
}
